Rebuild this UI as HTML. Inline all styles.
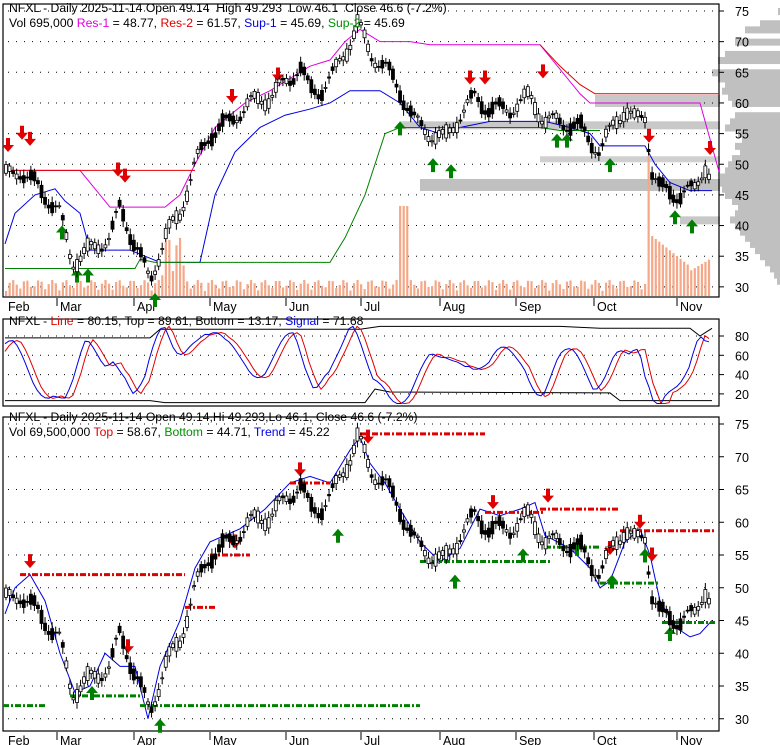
<!DOCTYPE html><html><head><meta charset="utf-8"><style>
html,body{margin:0;padding:0;background:#fff;width:780px;height:745px;overflow:hidden}
svg{display:block}
text{font-family:"Liberation Sans",Arial,sans-serif;font-size:12.2px;white-space:pre}
</style></head><body>
<svg id="s" width="780" height="745" xmlns="http://www.w3.org/2000/svg" xml:space="preserve">
<g id="bg"></g>
<text x="9" y="12" fill="#000">NFXL - Daily 2025-11-14 Open 49.14  High 49.293  Low 46.1  Close 46.6 (-7.2%)</text>
<text x="9" y="27"><tspan fill="#000">Vol 695,000 </tspan><tspan fill="#e000e0">Res-1</tspan><tspan fill="#000"> = 48.77, </tspan><tspan fill="#e00000">Res-2</tspan><tspan fill="#000"> = 61.57, </tspan><tspan fill="#0000e0">Sup-1</tspan><tspan fill="#000"> = 45.69, </tspan><tspan fill="#009000">Sup-2</tspan><tspan fill="#000"> = 45.69</tspan></text>
<text x="9" y="325"><tspan fill="#000">NFXL - </tspan><tspan fill="#e00000">Line</tspan><tspan fill="#000"> = 80.15, Top = 89.61, Bottom = 13.17, </tspan><tspan fill="#0000e0">Signal</tspan><tspan fill="#000"> = 71.68</tspan></text>
<text x="9" y="421" fill="#000">NFXL - Daily 2025-11-14 Open 49.14,Hi 49.293,Lo 46.1, Close 46.6 (-7.2%)</text>
<text x="9" y="436"><tspan fill="#000">Vol 69,500,000 </tspan><tspan fill="#e00000">Top</tspan><tspan fill="#000"> = 58.67, </tspan><tspan fill="#009000">Bottom</tspan><tspan fill="#000"> = 44.71, </tspan><tspan fill="#0000e0">Trend</tspan><tspan fill="#000"> = 45.22</tspan></text>
</svg>
<script>
var S=document.getElementById('s'),B=document.getElementById('bg'),NS='http://www.w3.org/2000/svg';
function el(t,a,p){var e=document.createElementNS(NS,t);for(var k in a)e.setAttribute(k,a[k]);(p||B).appendChild(e);return e;}
function tx(x,y,s,anchor){var e=el('text',{x:x,y:y,fill:'#000'},B);e.style.fontSize='12.5px';if(anchor)e.setAttribute('text-anchor',anchor);e.textContent=s;}
var L=3,R=719;
var ty=function(p){return 11+(75-p)*6.13}, by=function(p){return 424+(75-p)*6.55}, sy=function(v){return 336+(80-v)*0.965};
var prof=[[75,2],[73,20],[72,35],[70,45],[68,55],[67,62],[65,68],[64,62],[63,55],[62,58],[61,52],[60,48],[58,45],[57,50],[56,55],[55,42],[54,38],[53,45],[52,40],[51,48],[50,52],[49,55],[48,60],[47,62],[46,58],[45,55],[44,48],[43,42],[42,45],[41,50],[40,45],[39,40],[38,35],[37,30],[36,25],[35,20],[34,15],[33,10],[32,6],[31,3]];
prof.forEach(function(q,i){var y=ty(q[0]);el('rect',{x:780-q[1],y:y-3,width:q[1],height:7,fill:'#c0c0c0'});});
el('rect',{x:595,y:ty(61.3),width:125,height:12,fill:'#c8c8c8'});
el('rect',{x:400,y:ty(57),width:320,height:8,fill:'#c8c8c8'});
el('rect',{x:420,y:ty(47.6),width:300,height:12,fill:'#c0c0c0'});
el('rect',{x:540,y:ty(51.3),width:180,height:6,fill:'#d0d0d0'});
el('rect',{x:680,y:ty(41.5),width:40,height:8,fill:'#c8c8c8'});
[[4,297],[319,406],[417,731]].forEach(function(f){el('rect',{x:L,y:f[0],width:R-L,height:f[1]-f[0],fill:'none',stroke:'#000','stroke-width':1.2});});
function grid(vals,fy,lab,y0,y1){vals.forEach(function(v){var y=fy(v);if(y<y0||y>y1)return;el('line',{x1:8,y1:y,x2:R,y2:y,stroke:'#000','stroke-width':1,'stroke-dasharray':'1 7'});el('line',{x1:R,y1:y,x2:R+5,y2:y,stroke:'#000'});tx(735,y+5,String(v));});}
grid([75,70,65,60,55,50,45,40,35,30],ty,1,5,296);
grid([80,60,40,20],sy,1,320,405);
grid([75,70,65,60,55,50,45,40,35,30],by,1,418,730);
var months=[['Feb',5,null],['Mar',57],['Apr',134],['May',210],['Jun',286],['Jul',361],['Aug',440],['Sep',516],['Oct',594],['Nov',677]];
months.forEach(function(m){[[298,310],[732,744]].forEach(function(r){if(m[0]!='Feb')el('line',{x1:m[1],y1:r[0],x2:m[1],y2:r[0]+8,stroke:'#000'});tx(m[1]+3,r[1]+1,m[0]);});});
var K=[[5,48],[20,49],[40,46],[60,42],[72,34],[90,36],[110,38],[120,43],[135,37],[150,31],[165,38],[180,42],[195,50],[210,55],[230,57],[250,60],[270,61],[290,64],[300,66],[310,62],[320,62],[335,65],[350,70],[358,73],[370,68],[385,66],[400,62],[415,57],[430,55],[445,54],[460,58],[475,61],[490,59],[510,59],[530,61],[545,57],[560,57],[580,56],[600,52],[615,57],[625,59],[635,57],[645,58],[652,49],[660,46],[680,45],[695,46],[705,50],[712,47]];
function P(x){for(var i=0;i<K.length-1;i++)if(x<=K[i+1][0]){var t=(x-K[i][0])/(K[i+1][0]-K[i][0]);return K[i][1]+t*(K[i+1][1]-K[i][1]);}return 47;}
var C=[];for(var x=6;x<=712;x+=3.55){var c=P(x)+Math.sin(x*0.23)*1.2,n=Math.sin(x*1.7)*1.1+Math.sin(x*0.63)*0.7,o=c+n*0.6,cl=c-n*0.6;C.push({x:x,o:o,c:cl,h:Math.max(o,cl)+0.4+Math.abs(Math.sin(x))*0.6,l:Math.min(o,cl)-0.4-Math.abs(Math.cos(x*1.3))*0.6});}
function candles(fy){C.forEach(function(k){el('line',{x1:k.x,y1:fy(k.h),x2:k.x,y2:fy(k.l),stroke:'#000'});var t=fy(Math.max(k.o,k.c)),b=fy(Math.min(k.o,k.c));el('rect',{x:k.x-1.5,y:t,width:3,height:Math.max(1,b-t),fill:k.c>k.o?'#fff':'#000',stroke:'#000','stroke-width':0.8});});}
C.forEach(function(k,i){var v=5+Math.abs(Math.sin(i*2.3))*11;if(k.x>160&&k.x<185)v=20+Math.abs(Math.sin(i))*40;if(k.x>400&&k.x<410)v=90;if(k.x>645&&k.x<652)v=140;if(k.x>652&&k.x<690)v=60-(k.x-652)*0.8;if(k.x>690)v=25+(k.x-690)*0.6;el('rect',{x:k.x-1,y:296-v,width:2.2,height:v,fill:'#f4a888'});});
function poly(pts,col,w,fy,dash){var d=pts.map(function(p,i){return (i?'L':'M')+p[0]+' '+fy(p[1]);}).join('');var a={d:d,fill:'none',stroke:col,'stroke-width':w||1};if(dash)a['stroke-dasharray']=dash;el('path',a);}
poly([[5,49],[25,49],[80,49],[95,46],[110,43],[135,43],[165,43],[180,45],[195,50],[215,56],[245,60],[270,62],[290,64],[310,66],[330,67],[345,70],[360,72],[380,70],[410,70],[430,69.5],[500,69.5],[540,69.5],[580,61.5],[590,60],[700,60],[719,48.8]],'#e000e0',1,ty);
poly([[5,49],[195,49]],'#e00000',1,ty);
poly([[540,69.5],[560,66],[580,63],[595,61.5],[719,61.5]],'#e00000',1,ty);
poly([[5,37],[15,42],[35,45],[55,46],[65,44],[80,42],[90,36],[130,36],[145,35],[160,34],[200,34],[215,45],[235,52],[260,56],[285,58],[310,59],[330,60],[350,62],[380,62],[400,60],[420,56],[440,55],[460,56],[490,57],[520,57],[545,57],[570,56],[590,55],[600,53],[645,53],[655,50],[670,47],[690,45.7],[712,45.7]],'#0000e0',1,ty);
poly([[5,33],[135,33],[140,34.5],[155,34],[330,34],[345,38],[365,45],[385,55],[400,56],[540,56],[560,55.5],[600,55.5]],'#008000',1,ty);
function arrow(x,y,dn,fy){var c=dn?'#e00000':'#008000';var Y=fy(y);if(dn)el('path',{d:'M'+(x-2)+' '+(Y-14)+'h4v7h4l-6 7-6-7h4z',fill:c});else el('path',{d:'M'+(x-2)+' '+(Y+14)+'h4v-7h4l-6-7-6 7h4z',fill:c});}
[[8,52],[22,54],[30,53],[118,48],[125,47],[232,60],[278,63.5],[470,63],[485,63],[543,64],[649,53.5],[710,51.5]].forEach(function(a){arrow(a[0],a[1],1,ty);});
[[62,40],[77,33],[88,33],[155,29],[400,57],[433,51],[451,50],[557,55],[567,55],[610,51],[675,42.5],[692,41]].forEach(function(a){arrow(a[0],a[1],0,ty);});
candles(ty);
function stoch(ph){var pts=[];for(var x=5;x<=712;x+=4){var c=P(x+ph),c2=P(x+ph-20);var v=50+(c-c2)*4+Math.sin((x+ph)*0.09)*20;v=Math.max(10,Math.min(90,v));pts.push([x,v]);}return pts;}
poly([[5,13],[150,13],[165,11],[365,11],[375,25],[390,22],[610,21],[620,13],[712,13]],'#000',1,sy);
poly([[5,78],[150,78],[160,87],[360,87],[380,90],[560,90],[600,88],[690,88],[700,80],[712,88]],'#000',1,sy);
poly(stoch(0),'#e00000',1,sy);
poly(stoch(6),'#0000e0',1,sy);
poly([[5,46],[15,50],[30,52],[45,48],[60,40],[75,34],[90,35],[105,40],[120,38],[135,38],[148,30],[160,38],[180,45],[195,53],[210,57],[240,59],[265,62],[290,66],[310,67],[330,66],[350,71],[360,73],[370,69],[385,66],[400,62],[420,57],[440,54],[460,56],[480,62],[500,61],[520,62],[535,63],[545,58],[570,56],[590,53],[600,50],[610,51],[625,57],[640,59],[650,55],[660,48],[675,44],[690,42.5],[700,43],[712,45]],'#0000e0',1,by);
function dl(x1,x2,p,col){poly([[x1,p],[x2,p]],col,3,by,'6 2 2 2');}
dl(20,185,52,'#e00000');dl(185,215,47,'#e00000');dl(210,250,55,'#e00000');dl(290,330,66,'#e00000');dl(360,485,73.5,'#e00000');dl(485,545,61.5,'#e00000');dl(540,620,62,'#e00000');dl(620,715,58.7,'#e00000');
dl(3,45,32,'#008000');dl(70,140,33.5,'#008000');dl(140,420,32,'#008000');dl(420,550,54,'#008000');dl(545,600,56.2,'#008000');dl(600,660,50.7,'#008000');dl(662,715,44.7,'#008000');
[[30,53],[128,40],[235,56],[300,67],[368,72],[493,62],[548,63],[610,55],[640,59],[652,54]].forEach(function(a){arrow(a[0],a[1],1,by);});
[[92,35],[160,30],[338,59],[455,52],[523,56],[577,57],[612,52],[645,56],[670,44]].forEach(function(a){arrow(a[0],a[1],0,by);});
candles(by);
</script>
</body></html>
